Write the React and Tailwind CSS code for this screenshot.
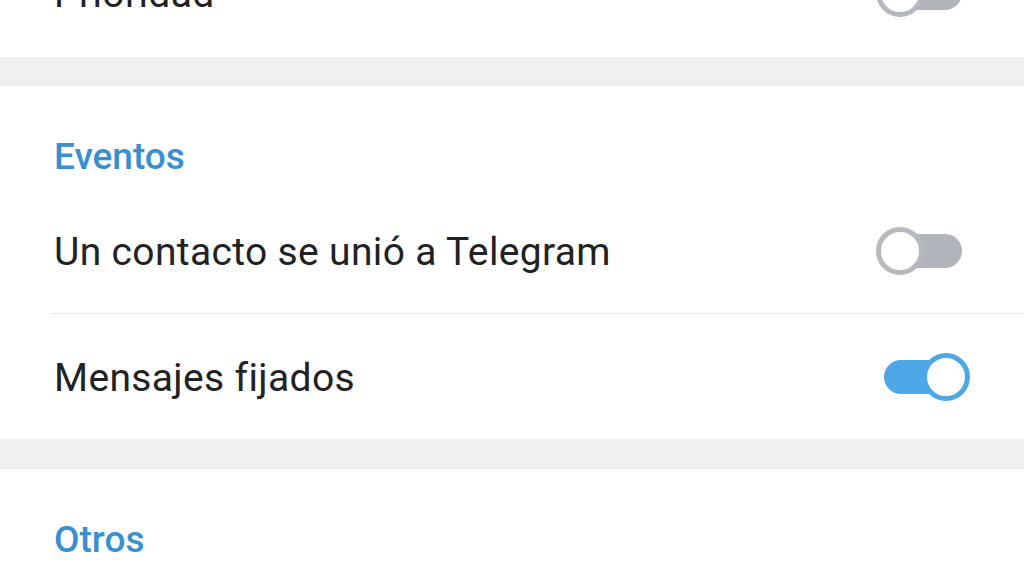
import React from "react";

function Toggle({ on }) {
  return (
    <div className="relative w-[94px] h-[48px] shrink-0">
      <div
        className={
          "absolute left-[8px] right-[8px] top-[7px] h-[34px] rounded-full " +
          (on ? "bg-[#4ea7e6]" : "bg-[#b1b5bb]")
        }
      />
      <div
        className={
          "absolute top-0 w-[48px] h-[48px] rounded-full bg-white border-[5px] " +
          (on ? "right-0 border-[#4ea7e6]" : "left-0 border-[#b6b9be]")
        }
      />
    </div>
  );
}

function Row({ label, on, divider }) {
  return (
    <div className="relative">
      <div className="h-[125px] flex items-center justify-between pl-[54px] pr-[54px]">
        <span className="text-[39px] leading-none tracking-[0.35px] text-[#222222] mt-[4px]">{label}</span>
        <Toggle on={on} />
      </div>
      {divider && <div className="ml-[51px] h-px bg-[#e4e4e4]" />}
    </div>
  );
}

function Header({ children }) {
  return (
    <div className="h-[102px] pt-[52px] pl-[54px]">
      <span className="text-[37px] leading-none font-medium text-[#3a8fd0]">{children}</span>
    </div>
  );
}

export default function App() {
  return (
    <div
      className="w-[1024px] h-[576px] overflow-hidden bg-[#efefef]"
      style={{ fontFamily: "Roboto, 'Noto Sans', sans-serif" }}
    >
      <div className="bg-white -mt-[70px] pb-[2px]">
        <Row label="Prioridad" on={false} />
      </div>
      <div className="h-[29px]" />
      <div className="bg-white">
        <Header>Eventos</Header>
        <Row label="Un contacto se unió a Telegram" on={false} divider />
        <Row label="Mensajes fijados" on={true} />
      </div>
      <div className="h-[30px]" />
      <div className="bg-white h-[200px]">
        <Header>Otros</Header>
      </div>
    </div>
  );
}
